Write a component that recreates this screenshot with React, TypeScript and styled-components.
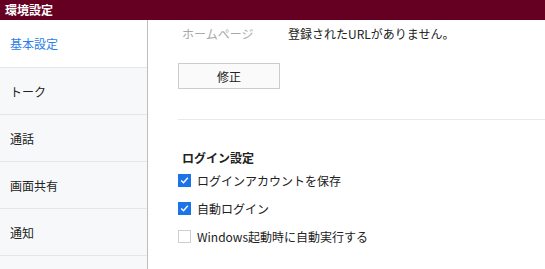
import { FC } from 'react';
import styled, { createGlobalStyle } from 'styled-components';

const GlobalStyle = createGlobalStyle`
  html, body {
    margin: 0;
    padding: 0;
    background: #fff;
    font-family: 'Noto Sans CJK JP', 'Noto Sans', sans-serif;
    font-size: 12px;
    color: #222;
  }
`;

const Window = styled.div`
  width: 545px;
  height: 269px;
  display: flex;
  flex-direction: column;
  overflow: hidden;
`;

const TitleBar = styled.div`
  height: 20px;
  background: #660022;
  color: #fff;
  font-weight: bold;
  font-size: 12px;
  line-height: 20px;
  padding-left: 5px;
  flex-shrink: 0;
`;

const Body = styled.div`
  flex: 1;
  display: flex;
  min-height: 0;
`;

const Sidebar = styled.ul`
  list-style: none;
  margin: 0;
  padding: 1px 0 0 0;
  width: 147px;
  background: #f7f8fa;
  border-right: 1px solid #bdbdbd;
  flex-shrink: 0;
`;

const NavItem = styled.li<{ $active?: boolean }>`
  height: 46px;
  display: flex;
  align-items: center;
  padding-left: 10px;
  border-bottom: 1px solid #e4e6e9;
  background: ${(p) => (p.$active ? '#fff' : 'transparent')};
  color: ${(p) => (p.$active ? '#2b7de9' : '#222')};
  &:first-child {
    margin-top: -1px;
    height: 47px;
  }
`;

const Content = styled.div`
  flex: 1;
  padding: 0 0 0 30px;
`;

const InfoRow = styled.div`
  display: flex;
  align-items: center;
  height: 26px;
  padding-left: 4px;
`;

const InfoLabel = styled.span`
  width: 106px;
  color: #a8a8a8;
`;

const InfoValue = styled.span`
  color: #222;
`;

const EditButton = styled.button`
  display: block;
  margin-top: 17px;
  width: 102px;
  height: 26px;
  background: #fafafa;
  border: 1px solid #cccccc;
  font-family: inherit;
  font-size: 12px;
  color: #222;
  padding: 0;
`;

const Divider = styled.hr`
  margin: 30px 0 0 0;
  border: none;
  border-top: 1px solid #e8e8e8;
`;

const SectionTitle = styled.div`
  font-weight: bold;
  padding-left: 4px;
  margin-top: 29px;
  height: 18px;
  line-height: 18px;
`;

const Options = styled.div`
  display: flex;
  flex-direction: column;
  gap: 15px;
  margin-top: 7px;
`;

const Option = styled.label`
  display: flex;
  align-items: center;
  gap: 6px;
  height: 13px;
  white-space: nowrap;
`;

const Box = styled.span<{ $checked?: boolean }>`
  width: 13px;
  height: 13px;
  box-sizing: border-box;
  background: ${(p) => (p.$checked ? '#1a73e8' : '#fff')};
  border: 1px solid ${(p) => (p.$checked ? '#1a73e8' : '#cfcfcf')};
  display: flex;
  align-items: center;
  justify-content: center;
  flex-shrink: 0;
`;

const Check: FC = () => (
  <svg width="9" height="9" viewBox="0 0 9 9">
    <path d="M1.2 4.6 L3.5 6.8 L7.8 1.8" fill="none" stroke="#fff" strokeWidth="1.4" />
  </svg>
);

const navItems = ['基本設定', 'トーク', '通話', '画面共有', '通知'];

const options = [
  { text: 'ログインアカウントを保存', checked: true },
  { text: '自動ログイン', checked: true },
  { text: 'Windows起動時に自動実行する', checked: false },
];

const App: FC = () => {
  return (
    <>
      <GlobalStyle />
      <Window>
        <TitleBar>環境設定</TitleBar>
        <Body>
          <Sidebar>
            {navItems.map((item, i) => (
              <NavItem key={item} $active={i === 0}>
                {item}
              </NavItem>
            ))}
          </Sidebar>
          <Content>
            <InfoRow>
              <InfoLabel>ホームページ</InfoLabel>
              <InfoValue>登録されたURLがありません。</InfoValue>
            </InfoRow>
            <EditButton>修正</EditButton>
            <Divider />
            <SectionTitle>ログイン設定</SectionTitle>
            <Options>
              {options.map((o) => (
                <Option key={o.text}>
                  <Box $checked={o.checked}>{o.checked && <Check />}</Box>
                  {o.text}
                </Option>
              ))}
            </Options>
          </Content>
        </Body>
      </Window>
    </>
  );
};

export default App;
